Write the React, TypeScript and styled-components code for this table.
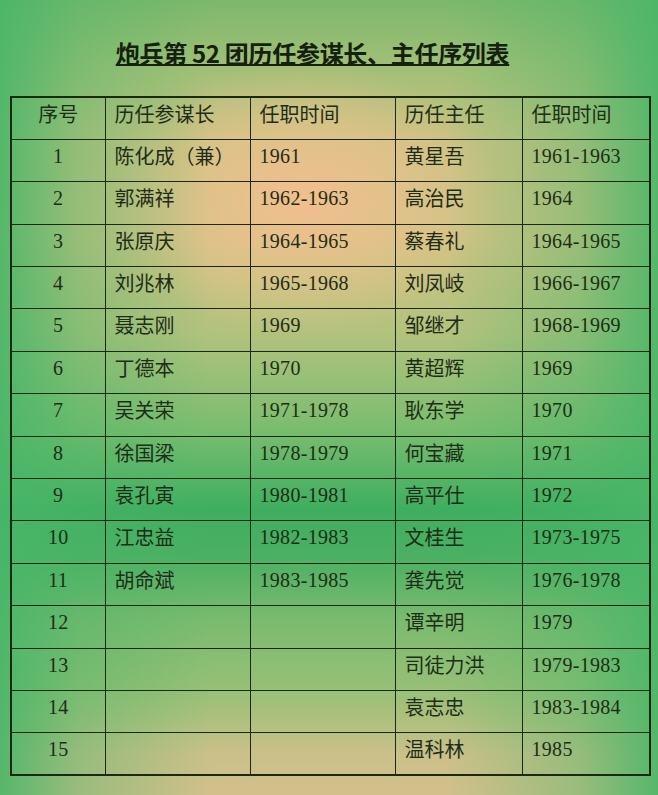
import React from 'react';
import styled, { createGlobalStyle } from 'styled-components';

type Row = [string, string, string, string, string];

const ROWS: Row[] = [
  ['1', '陈化成（兼）', '1961', '黄星吾', '1961-1963'],
  ['2', '郭满祥', '1962-1963', '高治民', '1964'],
  ['3', '张原庆', '1964-1965', '蔡春礼', '1964-1965'],
  ['4', '刘兆林', '1965-1968', '刘凤岐', '1966-1967'],
  ['5', '聂志刚', '1969', '邹继才', '1968-1969'],
  ['6', '丁德本', '1970', '黄超辉', '1969'],
  ['7', '吴关荣', '1971-1978', '耿东学', '1970'],
  ['8', '徐国梁', '1978-1979', '何宝藏', '1971'],
  ['9', '袁孔寅', '1980-1981', '高平仕', '1972'],
  ['10', '江忠益', '1982-1983', '文桂生', '1973-1975'],
  ['11', '胡命斌', '1983-1985', '龚先觉', '1976-1978'],
  ['12', '', '', '谭辛明', '1979'],
  ['13', '', '', '司徒力洪', '1979-1983'],
  ['14', '', '', '袁志忠', '1983-1984'],
  ['15', '', '', '温科林', '1985'],
];

const HEADERS = ['序号', '历任参谋长', '任职时间', '历任主任', '任职时间'];
const WIDTHS = [94, 145, 145, 127, 128];

const GlobalStyle = createGlobalStyle`
  html, body {
    margin: 0;
    padding: 0;
  }
  body {
    font-family: "Liberation Serif", "Noto Sans CJK SC", serif;
  }
`;

const Page = styled.div`
  width: 658px;
  height: 795px;
  box-sizing: border-box;
  padding: 39px 9px 0 10px;
  overflow: hidden;
  background:
    linear-gradient(
      to right,
      rgba(72, 182, 104, 0.9) 0%,
      rgba(72, 182, 104, 0.4) 12%,
      rgba(72, 182, 104, 0) 32%,
      rgba(72, 182, 104, 0) 68%,
      rgba(72, 182, 104, 0.4) 88%,
      rgba(72, 182, 104, 0.9) 100%
    ),
    radial-gradient(
      ellipse 30% 17% at 46% 25%,
      rgba(242, 190, 142, 1) 0%,
      rgba(236, 194, 142, 0.55) 55%,
      rgba(236, 194, 142, 0) 100%
    ),
    linear-gradient(
      to bottom,
      #7cb86c 0%,
      #a0bf76 8%,
      #c8c282 18%,
      #cec383 30%,
      #b2c27d 42%,
      #7abd6f 54%,
      #3fae60 64%,
      #4bb063 70%,
      #7abb6f 78%,
      #98c076 87%,
      #cbc089 95%,
      #d2c08b 100%
    );
`;

const Title = styled.h1`
  margin: 0 34px 0 0;
  text-align: center;
  font-family: "Noto Sans CJK SC", sans-serif;
  font-size: 24px;
  font-weight: 700;
  letter-spacing: -0.3px;
  line-height: 28px;
  color: #15200e;
  text-decoration: underline;
  text-decoration-thickness: 2px;
  text-underline-offset: 1px;
`;

const Table = styled.table`
  margin-top: 29px;
  width: 639px;
  table-layout: fixed;
  border-collapse: collapse;
  border: 2px solid #1b2812;
`;

const Row = styled.tr`
  height: 42.4px;
`;

const Cell = styled.td<{ $center?: boolean }>`
  border: 1.5px solid #1b2812;
  padding: 3px 0 0 ${({ $center }) => ($center ? '0' : '9px')};
  vertical-align: top;
  text-align: ${({ $center }) => ($center ? 'center' : 'left')};
  font-family: "Liberation Serif", "Noto Sans CJK SC", serif;
  font-size: 20px;
  line-height: 26px;
  letter-spacing: 0.3px;
  color: #1f2d18;
  white-space: nowrap;
  overflow: hidden;
`;

const HeadCell = styled(Cell).attrs({ as: 'th' })`
  font-weight: 400;
  font-family: "Noto Sans CJK SC", sans-serif;
  letter-spacing: 0;
`;

const NameText = styled.span`
  font-family: "Noto Sans CJK SC", sans-serif;
  letter-spacing: 0;
`;

const App: React.FC = () => (
  <>
    <GlobalStyle />
    <Page>
      <Title>炮兵第 52 团历任参谋长、主任序列表</Title>
      <Table>
        <colgroup>
          {WIDTHS.map((w, i) => (
            <col key={i} style={{ width: w }} />
          ))}
        </colgroup>
        <thead>
          <Row>
            {HEADERS.map((h, i) => (
              <HeadCell key={i} $center={i === 0}>
                {h}
              </HeadCell>
            ))}
          </Row>
        </thead>
        <tbody>
          {ROWS.map((r) => (
            <Row key={r[0]}>
              <Cell $center>{r[0]}</Cell>
              <Cell>
                <NameText>{r[1]}</NameText>
              </Cell>
              <Cell>{r[2]}</Cell>
              <Cell>
                <NameText>{r[3]}</NameText>
              </Cell>
              <Cell>{r[4]}</Cell>
            </Row>
          ))}
        </tbody>
      </Table>
    </Page>
  </>
);

export default App;
